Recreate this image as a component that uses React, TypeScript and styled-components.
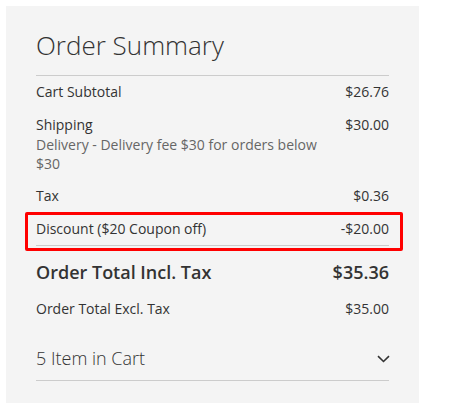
import React from "react";
import styled, { createGlobalStyle } from "styled-components";

const Global = createGlobalStyle`
  html, body { margin: 0; padding: 0; background: #fff; }
  body { font-family: "Open Sans", "Liberation Sans", sans-serif; color: #333; }
`;

const Page = styled.div`
  padding: 6px;
`;

const Panel = styled.aside`
  box-sizing: border-box;
  width: 413px;
  background: #f4f4f4;
  padding: 24px 30px 22px;
`;

const Title = styled.h2`
  margin: 0;
  font-size: 26px;
  line-height: 31.2px;
  font-weight: 300;
  color: #333;
  padding-bottom: 14px;
  border-bottom: 1px solid #ccc;
`;

const Row = styled.div<{ $grand?: boolean; $divided?: boolean; $highlight?: boolean }>`
  position: relative;
  display: flex;
  justify-content: space-between;
  align-items: flex-start;
  font-size: ${(p) => (p.$grand ? "18px" : "14px")};
  line-height: ${(p) => (p.$grand ? "26px" : "20px")};
  font-weight: ${(p) => (p.$grand ? 600 : 400)};
  padding: ${(p) => (p.$grand ? "13px 0 8px" : p.$divided ? "6px 0 6px" : "6px 0 7px")};
  border-bottom: ${(p) => (p.$divided ? "1px solid #ccc" : "none")};

  ${(p) =>
    p.$highlight &&
    `
    &::after {
      content: "";
      position: absolute;
      left: -11px;
      right: -14px;
      top: -1px;
      bottom: -6px;
      border: 3px solid #ff0000;
      border-radius: 2px;
      pointer-events: none;
    }
  `}
`;

const Label = styled.div`
  max-width: 285px;
`;

const Value = styled.div`
  text-align: right;
  white-space: nowrap;
`;

const Note = styled.div`
  color: #666;
  line-height: 19px;
`;

const CartToggle = styled.div`
  display: flex;
  justify-content: space-between;
  align-items: center;
  margin-top: 19px;
  padding-bottom: 9px;
  border-bottom: 1px solid #ccc;
  font-size: 18px;
  line-height: 26px;
  font-weight: 300;
  color: #333;
`;

const Chevron = styled.svg`
  display: block;
  width: 13px;
  height: 8px;
  margin-right: -1px;
  margin-top: 2px;
`;

export default function App() {
  return (
    <Page>
      <Global />
      <Panel>
        <Title>Order Summary</Title>
        <Row>
          <Label>Cart Subtotal</Label>
          <Value>$26.76</Value>
        </Row>
        <Row>
          <Label>
            Shipping
            <Note>Delivery - Delivery fee $30 for orders below $30</Note>
          </Label>
          <Value>$30.00</Value>
        </Row>
        <Row>
          <Label>Tax</Label>
          <Value>$0.36</Value>
        </Row>
        <Row $divided $highlight>
          <Label>Discount ($20 Coupon off)</Label>
          <Value>-$20.00</Value>
        </Row>
        <Row $grand>
          <Label>Order Total Incl. Tax</Label>
          <Value>$35.36</Value>
        </Row>
        <Row>
          <Label>Order Total Excl. Tax</Label>
          <Value>$35.00</Value>
        </Row>
        <CartToggle>
          <span>5 Item in Cart</span>
          <Chevron viewBox="0 0 13 8" fill="none">
            <path d="M1 1.2 L6.5 6.5 L12 1.2" stroke="#333" strokeWidth="1.6" />
          </Chevron>
        </CartToggle>
      </Panel>
    </Page>
  );
}
